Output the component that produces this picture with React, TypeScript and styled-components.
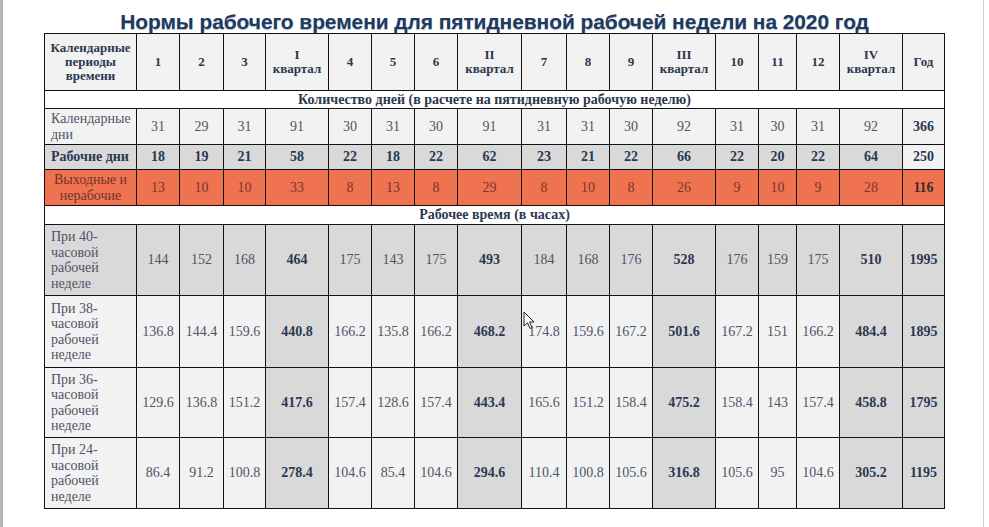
import React from "react";
import styled, { createGlobalStyle } from "styled-components";

const Global = createGlobalStyle`
  html, body { margin: 0; padding: 0; background: #ffffff; }
  body { font-family: "Liberation Serif", "Times New Roman", serif; }
`;

const Page = styled.div`
  position: relative;
  width: 989px;
  height: 527px;
  box-sizing: border-box;
  border-left: 3px solid #b4b4b4;
  background: #ffffff;
  overflow: hidden;
`;

const RightEdge = styled.div`
  position: absolute;
  top: 0;
  bottom: 0;
  left: 980px;
  width: 1px;
  background: #cfcfcf;
`;

const Content = styled.div`
  display: flex;
  flex-direction: column;
  align-items: center;
  margin-left: -3px;
`;

const Title = styled.h1`
  margin: 0;
  padding-top: 11px;
  height: 22px;
  line-height: 22px;
  font-family: "Liberation Sans", Arial, sans-serif;
  font-weight: 700;
  font-size: 21px;
  letter-spacing: -0.1px;
  color: #1f3a60;
  text-shadow: 0 1px 1px rgba(31, 58, 96, 0.35);
  white-space: nowrap;
  position: relative;
  z-index: 1;
`;

const Table = styled.table`
  border-collapse: collapse;
  table-layout: fixed;
  width: 900px;
  font-family: "Liberation Serif", "Times New Roman", serif;
`;

const Row = styled.tr<{ $h: number }>`
  height: ${(p) => p.$h}px;
`;

const Cell = styled.td<{
  $bg: string;
  $bold?: boolean;
  $align?: string;
  $color?: string;
  $size?: number;
  $lh?: number;
}>`
  border: 1px solid #111;
  padding: 0 ${(p) => (p.$align === "left" ? "4px 0 6px" : "0")};
  background: ${(p) => p.$bg};
  text-align: ${(p) => p.$align || "center"};
  vertical-align: middle;
  font-size: ${(p) => p.$size || 14}px;
  line-height: ${(p) => p.$lh || 15.5}px;
  font-weight: ${(p) => (p.$bold ? 700 : 400)};
  color: ${(p) => p.$color || (p.$bold ? "#2b3850" : "#4d5566")};
  white-space: pre-line;
  overflow: hidden;
`;

const SectionCell = styled.td`
  border: 1px solid #111;
  padding: 0;
  background: #ffffff;
  text-align: center;
  vertical-align: middle;
  font-size: 14px;
  line-height: 16px;
  font-weight: 700;
  color: #2b3850;
`;

const Cursor = styled.svg`
  position: absolute;
  left: 520px;
  top: 311px;
  width: 12px;
  height: 19px;
`;

const WIDTHS = [92, 43, 44, 42, 63, 43, 43, 43, 64, 45, 43, 43, 63, 43, 38, 43, 63, 42];

const HEAD = ["1", "2", "3", "I\nквартал", "4", "5", "6", "II\nквартал", "7", "8", "9", "III\nквартал", "10", "11", "12", "IV\nквартал", "Год"];
const QUARTER = new Set([3, 7, 11, 15]);
const YEAR = 16;

const CAL = ["31", "29", "31", "91", "30", "31", "30", "91", "31", "31", "30", "92", "31", "30", "31", "92", "366"];
const WORK = ["18", "19", "21", "58", "22", "18", "22", "62", "23", "21", "22", "66", "22", "20", "22", "64", "250"];
const OFF = ["13", "10", "10", "33", "8", "13", "8", "29", "8", "10", "8", "26", "9", "10", "9", "28", "116"];

const HOURS: { label: string; h: number; grey: boolean; vals: string[] }[] = [
  { label: "При 40-\nчасовой\nрабочей\nнеделе", h: 71, grey: true, vals: ["144", "152", "168", "464", "175", "143", "175", "493", "184", "168", "176", "528", "176", "159", "175", "510", "1995"] },
  { label: "При 38-\nчасовой\nрабочей\nнеделе", h: 72, grey: false, vals: ["136.8", "144.4", "159.6", "440.8", "166.2", "135.8", "166.2", "468.2", "174.8", "159.6", "167.2", "501.6", "167.2", "151", "166.2", "484.4", "1895"] },
  { label: "При 36-\nчасовой\nрабочей\nнеделе", h: 70, grey: false, vals: ["129.6", "136.8", "151.2", "417.6", "157.4", "128.6", "157.4", "443.4", "165.6", "151.2", "158.4", "475.2", "158.4", "143", "157.4", "458.8", "1795"] },
  { label: "При 24-\nчасовой\nрабочей\nнеделе", h: 71, grey: false, vals: ["86.4", "91.2", "100.8", "278.4", "104.6", "85.4", "104.6", "294.6", "110.4", "100.8", "105.6", "316.8", "105.6", "95", "104.6", "305.2", "1195"] },
];

const LIGHT = "#f2f2f2";
const GREY = "#d9d9d9";
const RED = "#f07351";

export default function App() {
  return (
    <>
      <Global />
      <Page>
        <RightEdge />
        <Content>
          <Title>Нормы рабочего времени для пятидневной рабочей недели на 2020 год</Title>
          <Table>
            <colgroup>
              {WIDTHS.map((w, i) => (
                <col key={i} style={{ width: w }} />
              ))}
            </colgroup>
            <tbody>
              <Row $h={57}>
                <Cell $bg={LIGHT} $bold $size={13} $lh={14}>
                  {"Календарные\nпериоды\nвремени"}
                </Cell>
                {HEAD.map((t, i) => (
                  <Cell key={i} $bg={LIGHT} $bold $size={13} $lh={14}>
                    {t}
                  </Cell>
                ))}
              </Row>
              <Row $h={18}>
                <SectionCell colSpan={18}>Количество дней (в расчете на пятидневную рабочую неделю)</SectionCell>
              </Row>
              <Row $h={36}>
                <Cell $bg={LIGHT} $align="left">{"Календарные\nдни"}</Cell>
                {CAL.map((v, i) => (
                  <Cell key={i} $bg={LIGHT} $bold={i === YEAR}>
                    {v}
                  </Cell>
                ))}
              </Row>
              <Row $h={25}>
                <Cell $bg={GREY} $bold $align="left">Рабочие дни</Cell>
                {WORK.map((v, i) => (
                  <Cell key={i} $bg={i === YEAR ? LIGHT : GREY} $bold>
                    {v}
                  </Cell>
                ))}
              </Row>
              <Row $h={36}>
                <Cell $bg={RED} $color="#6f3327">{"Выходные и\nнерабочие"}</Cell>
                {OFF.map((v, i) => (
                  <Cell key={i} $bg={RED} $bold={i === YEAR} $color={i === YEAR ? "#3b2a2c" : "#7a3426"}>
                    {v}
                  </Cell>
                ))}
              </Row>
              <Row $h={19}>
                <SectionCell colSpan={18}>Рабочее время (в часах)</SectionCell>
              </Row>
              {HOURS.map((r) => (
                <Row key={r.label} $h={r.h}>
                  <Cell $bg={r.grey ? GREY : LIGHT} $align="left">{r.label}</Cell>
                  {r.vals.map((v, i) => {
                    const strong = QUARTER.has(i) || i === YEAR;
                    return (
                      <Cell key={i} $bg={r.grey || strong ? GREY : LIGHT} $bold={strong}>
                        {v}
                      </Cell>
                    );
                  })}
                </Row>
              ))}
            </tbody>
          </Table>
        </Content>
        <Cursor viewBox="0 0 12 19">
          <path d="M1 1 L1 15 L4.5 11.8 L7 17.5 L9 16.6 L6.6 11 L11 11 Z" fill="#ffffff" stroke="#222" strokeWidth="1" strokeLinejoin="round" />
        </Cursor>
      </Page>
    </>
  );
}
